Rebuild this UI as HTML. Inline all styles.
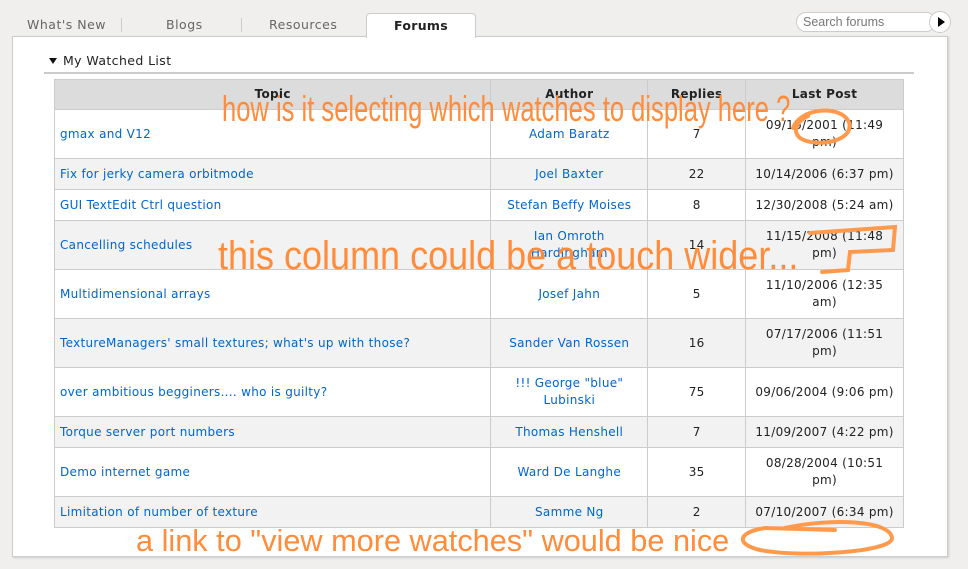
<!DOCTYPE html>
<html><head><meta charset="utf-8"><style>
*{margin:0;padding:0;box-sizing:border-box}
body{width:968px;height:569px;background:#f0efed;font-family:"DejaVu Sans","Liberation Sans",sans-serif;font-size:12px;color:#222;position:relative;overflow:hidden}
.tab{position:absolute;top:17px;font-size:12.5px;color:#666;letter-spacing:.5px}
.sep{position:absolute;top:18px;width:1px;height:14px;background:#ccc}
.panel{position:absolute;left:12px;top:36px;width:936px;height:521px;background:#fff;border:1px solid #ccc;box-shadow:1px 1px 2px #ccc}
.active{position:absolute;left:366px;top:13px;width:110px;height:25px;background:#fff;border:1px solid #ccc;border-bottom:none;border-radius:4px 4px 0 0;text-align:center;font-weight:bold;font-size:12.5px;padding-top:4px;color:#222;z-index:2;letter-spacing:.3px}
.search{position:absolute;left:796px;top:12px;width:140px;height:20px;border:1px solid #ccc;border-radius:10px;background:#fff;font-size:12.5px;color:#777;padding:2px 0 0 6px;font-family:"Liberation Sans",sans-serif}
.go{position:absolute;left:929px;top:11px;width:22px;height:22px;border:1px solid #ccc;border-radius:50%;background:#fff}
.go:after{content:"";position:absolute;left:8px;top:5px;border-left:7px solid #000;border-top:5px solid transparent;border-bottom:5px solid transparent}
.hdr{position:absolute;left:63px;top:53px;font-size:12.5px;letter-spacing:.4px}
.hdr:before{content:"";position:absolute;left:-14px;top:5px;border-top:6px solid #111;border-left:4px solid transparent;border-right:4px solid transparent}
.line{position:absolute;left:44px;top:72px;width:870px;height:2px;background:#ccc}
table{position:absolute;left:54px;top:79px;width:850px;border-collapse:collapse}
td,th{border:1px solid #ccc;font-size:12px;text-align:center;vertical-align:middle;line-height:17px;padding:0 5px;letter-spacing:.3px}
th{background:#dcdcdc;height:30px;font-weight:bold;padding-top:0}
td:first-child{text-align:left}
a{color:#0066cc;text-decoration:none}
tr.g td{background:#f2f2f2}
.ann{position:absolute;color:#ff8c3a;font-family:"Liberation Sans",sans-serif;white-space:nowrap;transform-origin:0 0}
</style></head><body>
<div class="tab" style="left:27px">What's New</div>
<div class="sep" style="left:121px"></div>
<div class="tab" style="left:166px">Blogs</div>
<div class="sep" style="left:241px"></div>
<div class="tab" style="left:269px">Resources</div>
<div class="panel"></div>
<div class="active">Forums</div>
<div class="search">Search forums</div>
<div class="go"></div>
<div class="hdr">My Watched List</div>
<div class="line"></div>
<table>
<colgroup><col style="width:437px"><col style="width:157px"><col style="width:98px"><col style="width:158px"></colgroup>
<tr><th>Topic</th><th>Author</th><th>Replies</th><th>Last Post</th></tr>
<tr style="height:49px"><td><a>gmax and V12</a></td><td><a>Adam Baratz</a></td><td>7</td><td>09/16/2001 (11:49<br>pm)</td></tr>
<tr class="g" style="height:31px"><td><a>Fix for jerky camera orbitmode</a></td><td><a>Joel Baxter</a></td><td>22</td><td>10/14/2006 (6:37 pm)</td></tr>
<tr style="height:31px"><td><a>GUI TextEdit Ctrl question</a></td><td><a>Stefan Beffy Moises</a></td><td>8</td><td>12/30/2008 (5:24 am)</td></tr>
<tr class="g" style="height:49px"><td><a>Cancelling schedules</a></td><td><a>Ian Omroth<br>Hardingham</a></td><td>14</td><td>11/15/2008 (11:48<br>pm)</td></tr>
<tr style="height:49px"><td><a>Multidimensional arrays</a></td><td><a>Josef Jahn</a></td><td>5</td><td>11/10/2006 (12:35<br>am)</td></tr>
<tr class="g" style="height:49px"><td><a>TextureManagers' small textures; what's up with those?</a></td><td><a>Sander Van Rossen</a></td><td>16</td><td>07/17/2006 (11:51<br>pm)</td></tr>
<tr style="height:49px"><td><a>over ambitious begginers.... who is guilty?</a></td><td><a>!!! George "blue"<br>Lubinski</a></td><td>75</td><td>09/06/2004 (9:06 pm)</td></tr>
<tr class="g" style="height:31px"><td><a>Torque server port numbers</a></td><td><a>Thomas Henshell</a></td><td>7</td><td>11/09/2007 (4:22 pm)</td></tr>
<tr style="height:49px"><td><a>Demo internet game</a></td><td><a>Ward De Langhe</a></td><td>35</td><td>08/28/2004 (10:51<br>pm)</td></tr>
<tr class="g" style="height:31px"><td><a>Limitation of number of texture</a></td><td><a>Samme Ng</a></td><td>2</td><td>07/10/2007 (6:34 pm)</td></tr>
</table>
<div class="ann" style="left:222px;top:88px;font-size:36px;transform:scaleX(.71)">how is it selecting which watches to display here ?</div>
<div class="ann" style="left:218px;top:234px;font-size:40px;transform:scaleX(.9)">this column could be a touch wider...</div>
<div class="ann" style="left:136px;top:523px;font-size:31px;transform:scaleX(.99)">a link to "view more watches" would be nice</div>
<svg style="position:absolute;left:0;top:0" width="968" height="569" fill="none" stroke="#ff9a4d" stroke-width="4" stroke-linecap="round">
<path d="M793 128 C800 108 840 104 849 122 C855 142 815 148 800 138 C793 132 795 122 808 116"/>
<path d="M810 233 L895 227 L893 250 L850 252 L848 270 L822 272"/>
<path d="M785 528 C830 518 890 520 892 538 C893 552 800 558 760 550 C735 544 738 532 765 528 L835 530"/>
</svg>
</body></html>
